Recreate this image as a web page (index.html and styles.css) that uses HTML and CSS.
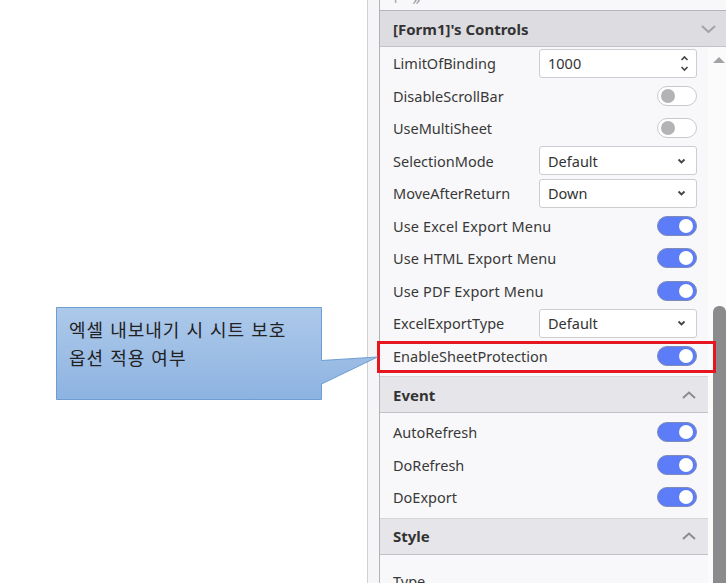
FILE: index.html
```html
<!DOCTYPE html>
<html lang="ko">
<head>
<meta charset="utf-8">
<title>Properties</title>
<link rel="stylesheet" href="styles.css">
</head>
<body>
<div class="screen">
  <div class="canvas"></div>
  <div class="gutter"></div>
  <div class="panel">
    <div class="toolbar"><span class="tb-icons">+ »</span></div>
    <div class="sec-head sec-top">
      <span class="sec-title">[Form1]'s Controls</span>
      <svg class="chev-down" width="15" height="8" viewBox="0 0 15 8"><path d="M1 1 L7.5 7 L14 1" fill="none" stroke="#a3a3a6" stroke-width="2"/></svg>
    </div>
    <div class="scroll">
      <div class="content">
        <div class="sec-body sec-first">
          <div class="row">
            <span class="label">LimitOfBinding</span>
            <div class="field">
              <span class="field-text">1000</span>
              <svg class="spin" width="9" height="17" viewBox="0 0 9 17"><path d="M1.5 5 L4.5 2 L7.5 5" fill="none" stroke="#444" stroke-width="1.6"/><path d="M1.5 12 L4.5 15 L7.5 12" fill="none" stroke="#444" stroke-width="1.6"/></svg>
            </div>
          </div>
          <div class="row"><span class="label">DisableScrollBar</span><span class="toggle"></span></div>
          <div class="row"><span class="label">UseMultiSheet</span><span class="toggle"></span></div>
          <div class="row">
            <span class="label">SelectionMode</span>
            <div class="field select"><span class="field-text">Default</span><svg class="sel-chev" width="9" height="6" viewBox="0 0 9 6"><path d="M1.5 1.5 L4.5 4.5 L7.5 1.5" fill="none" stroke="#444" stroke-width="1.8"/></svg></div>
          </div>
          <div class="row">
            <span class="label">MoveAfterReturn</span>
            <div class="field select"><span class="field-text">Down</span><svg class="sel-chev" width="9" height="6" viewBox="0 0 9 6"><path d="M1.5 1.5 L4.5 4.5 L7.5 1.5" fill="none" stroke="#444" stroke-width="1.8"/></svg></div>
          </div>
          <div class="row"><span class="label wide">Use Excel Export Menu</span><span class="toggle on"></span></div>
          <div class="row"><span class="label wide">Use HTML Export Menu</span><span class="toggle on"></span></div>
          <div class="row"><span class="label wide">Use PDF Export Menu</span><span class="toggle on"></span></div>
          <div class="row">
            <span class="label">ExcelExportType</span>
            <div class="field select"><span class="field-text">Default</span><svg class="sel-chev" width="9" height="6" viewBox="0 0 9 6"><path d="M1.5 1.5 L4.5 4.5 L7.5 1.5" fill="none" stroke="#444" stroke-width="1.8"/></svg></div>
          </div>
          <div class="row marked">
            <span class="label">EnableSheetProtection</span><span class="toggle on"></span>
            <span class="highlight"></span>
          </div>
        </div>

        <div class="sec-head">
          <span class="sec-title">Event</span>
          <svg class="chev-up" width="14" height="8" viewBox="0 0 14 8"><path d="M1 7 L7 1.5 L13 7" fill="none" stroke="#8c8c8f" stroke-width="2"/></svg>
        </div>
        <div class="sec-body">
          <div class="row"><span class="label">AutoRefresh</span><span class="toggle on"></span></div>
          <div class="row"><span class="label">DoRefresh</span><span class="toggle on"></span></div>
          <div class="row"><span class="label">DoExport</span><span class="toggle on"></span></div>
        </div>

        <div class="sec-head">
          <span class="sec-title">Style</span>
          <svg class="chev-up" width="14" height="8" viewBox="0 0 14 8"><path d="M1 7 L7 1.5 L13 7" fill="none" stroke="#8c8c8f" stroke-width="2"/></svg>
        </div>
        <div class="sec-body">
          <div class="row row-type"><span class="label">Type</span></div>
        </div>
      </div>
      <div class="vscroll">
        <span class="sb-arrow"></span>
        <span class="sb-thumb"></span>
      </div>
    </div>
  </div>

  <div class="callout">
    <svg class="callout-shape" width="324" height="95" viewBox="0 0 324 95">
      <defs>
        <linearGradient id="cg" x1="0" y1="0" x2="0" y2="1">
          <stop offset="0" stop-color="#adc9ea"/>
          <stop offset="1" stop-color="#8db3e1"/>
        </linearGradient>
      </defs>
      <path d="M0.5 0.5 H265.5 V53.5 L321.5 50 L265.5 77 V92.5 H0.5 Z" fill="url(#cg)" stroke="#6e9dd3" stroke-width="1"/>
    </svg>
    <div class="callout-text">엑셀 내보내기 시 시트 보호<br>옵션 적용 여부</div>
  </div>
</div>
</body>
</html>
```

FILE: styles.css
```css
* { box-sizing: border-box; }

html, body {
  margin: 0;
  padding: 0;
  background: #ffffff;
}

body {
  width: 726px;
  height: 583px;
  overflow: hidden;
  font-family: "Noto Sans", "Noto Sans CJK KR", sans-serif;
  color: #363636;
}

.screen {
  position: relative;
  display: flex;
  width: 726px;
  height: 583px;
}

.canvas {
  width: 367px;
  flex: none;
  background: #ffffff;
}

.gutter {
  width: 13px;
  flex: none;
  background: #f5f5f7;
  border-left: 1px solid #d2d2d6;
  border-right: 1px solid #b3b3b7;
}

.panel {
  flex: 1;
  display: flex;
  flex-direction: column;
  background: #f8f8fa;
  min-width: 0;
}

.toolbar {
  height: 10px;
  overflow: hidden;
  padding-left: 11px;
  flex: none;
}

.tb-icons {
  display: block;
  margin-top: -11px;
  font-size: 16px;
  line-height: 20px;
  color: #9a9a9e;
  letter-spacing: 4px;
}

.sec-head {
  display: flex;
  align-items: center;
  justify-content: space-between;
  height: 37px;
  padding: 0 12px 0 13px;
  background: #e6e6ea;
  border-top: 1px solid #d6d6da;
  border-bottom: 1px solid #c3c3c7;
  flex: none;
}

.sec-top {
  height: 37px;
  background: #dddce1;
  border-top: 1px solid #b6b6ba;
  border-bottom: 1px solid #c3c3c7;
  padding-right: 10px;
}

.sec-title {
  font-weight: 700;
  font-size: 15px;
  color: #333333;
}

.scroll {
  flex: 1;
  display: flex;
  min-height: 0;
}

.content {
  flex: 1;
  min-width: 0;
}

.sec-body {
  padding: 3px 0 4px;
}

.sec-first {
  padding-top: 0;
}

.row {
  position: relative;
  display: flex;
  align-items: center;
  justify-content: space-between;
  height: 32.5px;
  padding: 0 11px 0 13px;
}

.row-type {
  align-items: flex-start;
  padding-top: 13px;
}

.label {
  font-size: 14.5px;
  color: #383838;
  white-space: nowrap;
}

.label.wide {
  letter-spacing: 0.15px;
}

.field {
  display: flex;
  align-items: center;
  justify-content: space-between;
  width: 158px;
  height: 29px;
  padding: 0 8px 0 8px;
  background: #ffffff;
  border: 1px solid #cdcdd1;
  border-radius: 3px;
}

.field-text {
  font-size: 14.5px;
  color: #333333;
}

.spin { margin-right: -1px; }
.sel-chev { margin-right: 2px; }

.toggle {
  position: relative;
  width: 40px;
  height: 20px;
  border-radius: 10px;
  background: #ffffff;
  border: 1px solid #c9c9cd;
  flex: none;
}

.toggle::after {
  content: "";
  position: absolute;
  top: 2px;
  left: 3px;
  width: 14px;
  height: 14px;
  border-radius: 50%;
  background: #b3b3b6;
}

.toggle.on {
  background: #5c7cf8;
  border-color: #7e8bb8;
}

.toggle.on::after {
  left: auto;
  right: 3px;
  background: #ffffff;
}

.highlight {
  position: absolute;
  left: -3px;
  top: 1px;
  width: 339px;
  height: 32px;
  border: 3px solid #e5161f;
  pointer-events: none;
}

.vscroll {
  width: 18px;
  flex: none;
  display: flex;
  flex-direction: column;
  align-items: flex-end;
  background: #fbfbfc;
}

.sb-arrow {
  display: block;
  width: 0;
  height: 0;
  margin: 10px 1px 0 0;
  border-left: 6.5px solid transparent;
  border-right: 6.5px solid transparent;
  border-bottom: 6px solid #a3a3a6;
}

.sb-thumb {
  display: block;
  width: 13px;
  flex: 1;
  margin-top: 243px;
  background: #8b8b8d;
  border-radius: 6px 6px 0 0;
}

.callout {
  position: absolute;
  left: 56px;
  top: 307px;
  width: 324px;
  height: 95px;
}

.callout-shape {
  position: absolute;
  left: 0;
  top: 0;
}

.callout-text {
  position: relative;
  padding: 8px 0 0 13px;
  font-family: "Noto Sans CJK KR", "Noto Sans", sans-serif;
  font-size: 18px;
  line-height: 28px;
  letter-spacing: 1px;
  color: #222222;
}
```
